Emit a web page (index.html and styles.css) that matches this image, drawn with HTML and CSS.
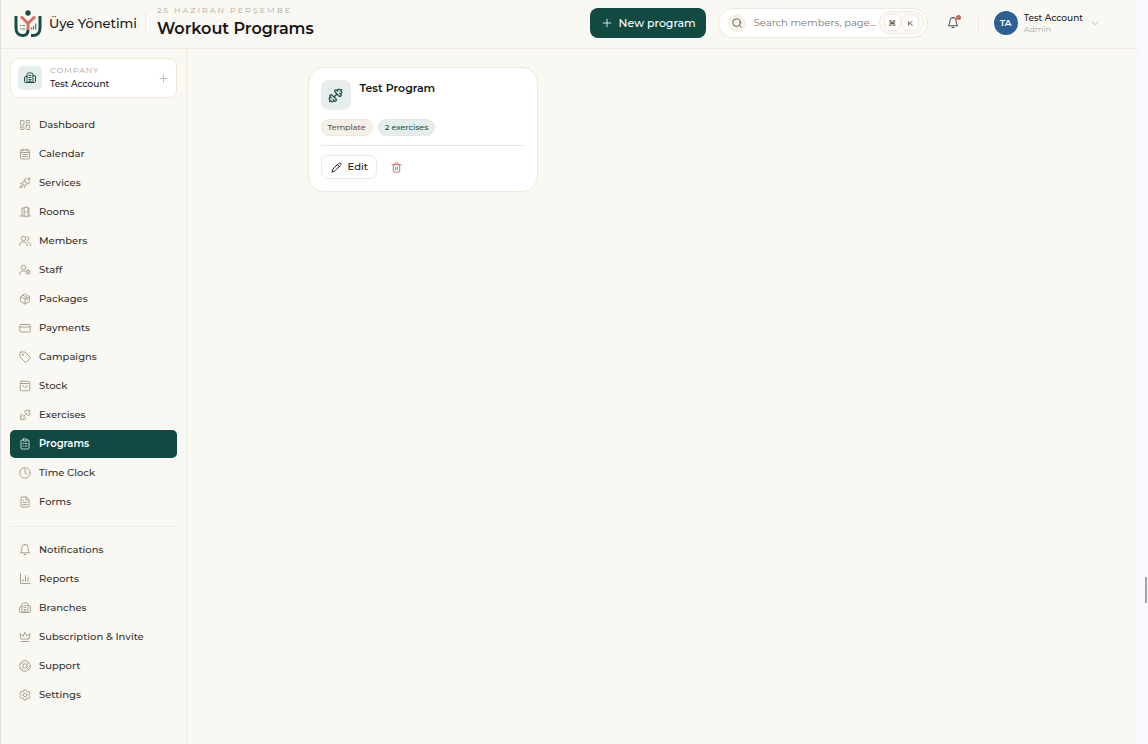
FILE: index.html
```html
<!DOCTYPE html>
<html lang="en">
<head>
<meta charset="utf-8">
<meta name="viewport" content="width=device-width, initial-scale=1">
<title>Workout Programs</title>
<link rel="stylesheet" href="styles.css">
</head>
<body>
<svg class="sprite" aria-hidden="true">
  <symbol id="dashboard" viewBox="0 0 24 24"><rect x="3" y="3" width="7" height="9" rx="1"/><rect x="14" y="3" width="7" height="5" rx="1"/><rect x="14" y="12" width="7" height="9" rx="1"/><rect x="3" y="16" width="7" height="5" rx="1"/></symbol>
  <symbol id="calendar" viewBox="0 0 24 24"><rect x="3" y="4" width="18" height="18" rx="2"/><path d="M8 2v4M16 2v4M3 9h18M7 13h10M7 17h10"/></symbol>
  <symbol id="services" viewBox="0 0 24 24"><path d="M11 5l2 6 6 2-6 2-2 6-2-6-6-2 6-2zM20 1v6M17 4h6M14 2v2M21 10v2M4 17v5M1.500 19.500h5"/></symbol>
  <symbol id="rooms" viewBox="0 0 24 24"><path d="M11 3l7-1v20l-7-2zM11 4H6v16M2 20h9M18 4h2v16h3M14 11v2"/></symbol>
  <symbol id="members" viewBox="0 0 24 24"><circle cx="9" cy="7" r="4.500"/><path d="M1 21c0-5 3-7 8-7s8 2 8 7M16 3a4 4 0 0 1 0 8M19 14c2 1 4 3 4 7"/></symbol>
  <symbol id="staff" viewBox="0 0 24 24"><circle cx="9" cy="7" r="4.500"/><path d="M1 21c0-5 3-7 8-7l3 .5"/><circle cx="18" cy="16" r="3"/><path d="M18 11v2M18 19v2M13.700 13.500l1.700 1M20.600 17.500l1.700 1M13.700 18.500l1.700-1M20.600 14.500l1.700-1"/></symbol>
  <symbol id="packages" viewBox="0 0 24 24"><path d="M12 2l8 4.500a2 2 0 0 1 1 2v7a2 2 0 0 1-1 2L12 22l-8-4.500a2 2 0 0 1-1-2v-7a2 2 0 0 1 1-2zM3.500 7.500L12 12l8.500-4.500M12 12v10M8 4.500l8.500 5v4"/></symbol>
  <symbol id="payments" viewBox="0 0 24 24"><rect x="1.500" y="5" width="21" height="15" rx="2"/><path d="M2 10h20"/></symbol>
  <symbol id="campaigns" viewBox="0 0 24 24"><path d="M3 2h9l10 10a2 2 0 0 1 0 3l-7 7a2 2 0 0 1-3 0L2 12V3a1 1 0 0 1 1-1z"/><circle cx="7.500" cy="7.500" r="1"/></symbol>
  <symbol id="stock" viewBox="0 0 24 24"><rect x="2.500" y="2.500" width="19" height="19" rx="2"/><path d="M3 7h18M8 11c0 5 8 5 8 0"/></symbol>
  <symbol id="dumbbell" viewBox="0 0 24 24"><path d="M14.400 14.400L9.600 9.600M18.657 21.485a2 2 0 1 1-2.829-2.828l-1.767 1.768a2 2 0 1 1-2.829-2.829l6.364-6.364a2 2 0 1 1 2.829 2.829l-1.768 1.767a2 2 0 1 1 2.828 2.829zM21.500 21.500l-1.400-1.400M3.900 3.900L2.500 2.500M6.404 12.768a2 2 0 1 1-2.829-2.829l1.768-1.767a2 2 0 1 1-2.828-2.829l2.828-2.828a2 2 0 1 1 2.829 2.828l1.767-1.768a2 2 0 1 1 2.829 2.829z" transform="matrix(-1 0 0 1 24 0)"/></symbol>
  <symbol id="programs" viewBox="0 0 24 24"><path d="M8 4H6a2 2 0 0 0-2 2v14a2 2 0 0 0 2 2h12a2 2 0 0 0 2-2V6a2 2 0 0 0-2-2h-2"/><rect x="8" y="2" width="8" height="4" rx="1"/><path d="M8 11h1M12 11h4M8 16h1M12 16h4"/></symbol>
  <symbol id="clock" viewBox="0 0 24 24"><circle cx="12" cy="12" r="10.500"/><path d="M12 5v7l4 3"/></symbol>
  <symbol id="forms" viewBox="0 0 24 24"><path d="M14 2H6a2 2 0 0 0-2 2v16a2 2 0 0 0 2 2h12a2 2 0 0 0 2-2V8zM14 2v6h6M8 9h2M8 13h8M8 17h8"/></symbol>
  <symbol id="bell" viewBox="0 0 24 24"><path d="M3 17c3-3 2-6 3-10a6 6 0 0 1 12 0c1 4 0 7 3 10zM10 21h4M12 1v1"/></symbol>
  <symbol id="reports" viewBox="0 0 24 24"><path d="M3 2v19h19M8 17v-4M13 17V5M18 17V9"/></symbol>
  <symbol id="building" viewBox="0 0 24 24"><path d="M6 21V5a3 3 0 0 1 3-3h6a3 3 0 0 1 3 3v16M6 9H4a3 3 0 0 0-3 3v7a2 2 0 0 0 2 2h18a2 2 0 0 0 2-2v-9a3 3 0 0 0-3-3h-2M10 7h4M10 11h4M10 15h4M10 21v-3h4v3"/></symbol>
  <symbol id="crown" viewBox="0 0 24 24"><path d="M12 3l4 7 6-5-2 11H4L2 5l6 5zM4 21h16"/></symbol>
  <symbol id="support" viewBox="0 0 24 24"><circle cx="12" cy="12" r="10.500"/><circle cx="12" cy="12" r="4.500"/><path d="M4.900 4.900L9 9M15 9l4.100-4.100M15 15l4.100 4.100M9 15l-4.100 4.100"/></symbol>
  <symbol id="settings" viewBox="0 0 24 24"><path d="M10 2h4l1 3 2 1 3-1 2 4-2 2v2l2 2-2 4-3-1-2 1-1 3h-4l-1-3-2-1-3 1-2-4 2-2v-2L2 9l2-4 3 1 2-1z"/><circle cx="12" cy="12" r="3.500"/></symbol>
  <symbol id="plus" viewBox="0 0 24 24"><path d="M12 3v18M3 12h18"/></symbol>
  <symbol id="search" viewBox="0 0 24 24"><circle cx="11" cy="11" r="9"/><path d="M22 22l-4-4"/></symbol>
  <symbol id="chevron" viewBox="0 0 24 24"><path d="M3 8l9 9 9-9"/></symbol>
  <symbol id="pencil" viewBox="0 0 24 24"><path d="M17 3a2.800 2.800 0 1 1 4 4L8 20l-6 2 2-6zM14 6l4 4"/></symbol>
  <symbol id="trash" viewBox="0 0 24 24"><path d="M2 6h20M19 6v14a2 2 0 0 1-2 2H7a2 2 0 0 1-2-2V6M8 6V4a2 2 0 0 1 2-2h4a2 2 0 0 1 2 2v2M10 11v6M14 11v6"/></symbol>
</svg>
<div class="app">
  <header class="topbar">
    <a class="brand" href="#">
      <svg class="logo" viewBox="0 0 30 30" aria-hidden="true">
        <path class="logo-frame" d="M3 8v12c0 5 3 7.500 7 7.500s5-2.500 5-6M27 8v12c0 5-3 7.500-7 7.500h-2"/>
        <path class="logo-arms" d="M8 8.500l7 7 7-7M15 15v7"/>
        <circle class="logo-dot" cx="15" cy="5" r="2.700"/>
        <path class="logo-detail" d="M7 17.500h1.500M9.500 17.500h2.500M7 21h1.500M9.500 21h2.500M18.500 21.500v-2M20.500 21.500v-3.500M22.700 21.500v-6"/>
      </svg>
      <span>Üye Yönetimi</span>
    </a>
    <div class="heading">
      <p class="date">25 HAZİRAN PERŞEMBE</p>
      <h1>Workout Programs</h1>
    </div>
    <button class="new-program" type="button"><svg class="icon"><use href="#plus"/></svg>New program</button>
    <div class="search">
      <label class="search-icon" for="q" aria-label="Search"><svg class="icon"><use href="#search"/></svg></label>
      <input id="q" type="text" placeholder="Search members, page...">
      <span class="keys"><kbd>⌘</kbd><kbd>K</kbd></span>
    </div>
    <button class="alerts" type="button" aria-label="Notifications"><svg class="icon"><use href="#bell"/></svg><span class="alert-dot"></span></button>
    <button class="account" type="button">
      <span class="avatar">TA</span>
      <span class="account-text"><span class="account-name">Test Account</span><span class="account-role">Admin</span></span>
      <svg class="icon chevron"><use href="#chevron"/></svg>
    </button>
  </header>
  <aside class="sidebar">
    <button class="company" type="button">
      <span class="company-icon"><svg class="icon"><use href="#building"/></svg></span>
      <span class="company-text"><span class="company-label">COMPANY</span><span class="company-name">Test Account</span></span>
      <svg class="icon company-plus"><use href="#plus"/></svg>
    </button>
    <nav>
      <ul class="nav">
        <li><a href="#"><svg class="icon"><use href="#dashboard"/></svg>Dashboard</a></li>
        <li><a href="#"><svg class="icon"><use href="#calendar"/></svg>Calendar</a></li>
        <li><a href="#"><svg class="icon"><use href="#services"/></svg>Services</a></li>
        <li><a href="#"><svg class="icon"><use href="#rooms"/></svg>Rooms</a></li>
        <li><a href="#"><svg class="icon"><use href="#members"/></svg>Members</a></li>
        <li><a href="#"><svg class="icon"><use href="#staff"/></svg>Staff</a></li>
        <li><a href="#"><svg class="icon"><use href="#packages"/></svg>Packages</a></li>
        <li><a href="#"><svg class="icon"><use href="#payments"/></svg>Payments</a></li>
        <li><a href="#"><svg class="icon"><use href="#campaigns"/></svg>Campaigns</a></li>
        <li><a href="#"><svg class="icon"><use href="#stock"/></svg>Stock</a></li>
        <li><a href="#"><svg class="icon"><use href="#dumbbell"/></svg>Exercises</a></li>
        <li><a class="current" href="#" aria-current="page"><svg class="icon"><use href="#programs"/></svg>Programs</a></li>
        <li><a href="#"><svg class="icon"><use href="#clock"/></svg>Time Clock</a></li>
        <li><a href="#"><svg class="icon"><use href="#forms"/></svg>Forms</a></li>
      </ul>
      <ul class="nav nav-secondary">
        <li><a href="#"><svg class="icon"><use href="#bell"/></svg>Notifications</a></li>
        <li><a href="#"><svg class="icon"><use href="#reports"/></svg>Reports</a></li>
        <li><a href="#"><svg class="icon"><use href="#building"/></svg>Branches</a></li>
        <li><a href="#"><svg class="icon"><use href="#crown"/></svg>Subscription &amp; Invite</a></li>
        <li><a href="#"><svg class="icon"><use href="#support"/></svg>Support</a></li>
        <li><a href="#"><svg class="icon"><use href="#settings"/></svg>Settings</a></li>
      </ul>
    </nav>
  </aside>
  <main class="content">
    <div class="cards">
      <article class="card">
        <div class="card-head">
          <span class="card-icon"><svg class="icon"><use href="#dumbbell"/></svg></span>
          <h2>Test Program</h2>
        </div>
        <div class="tags"><span class="tag">Template</span><span class="tag tag-green">2 exercises</span></div>
        <div class="card-actions">
          <button class="edit" type="button"><svg class="icon"><use href="#pencil"/></svg>Edit</button>
          <button class="delete" type="button" aria-label="Delete"><svg class="icon"><use href="#trash"/></svg></button>
        </div>
      </article>
    </div>
  </main>
</div>
<div class="scroll-thumb"></div>
</body>
</html>
```
FILE: styles.css
```css
* { box-sizing: border-box; margin: 0; padding: 0; }
body {
  min-height: 100vh;
  padding-right: 10px;
  background: #f8f9fe;
  color: #171717;
  font: 500 11px/14px Montserrat, Inter, "Open Sans", sans-serif;
}
button, input, kbd { font: inherit; color: inherit; }
button { border: 0; background: none; text-align: left; cursor: pointer; }
a { color: inherit; text-decoration: none; }
ul { list-style: none; }
.sprite { position: absolute; width: 0; height: 0; }
.icon {
  flex: none;
  width: 12px;
  height: 12px;
  fill: none;
  stroke: currentColor;
  stroke-width: 2;
  stroke-linecap: round;
  stroke-linejoin: round;
}
.app {
  display: grid;
  grid-template-columns: 186px 1fr;
  grid-template-rows: 49px 1fr;
  min-height: 100vh;
  border-left: 1px solid #dfe1e5;
  background: #faf8f3;
}

/* Top bar */
.topbar {
  grid-column: 1 / -1;
  display: flex;
  align-items: center;
  padding: 0 39px 3px 12px;
  border-bottom: 1px solid #efe8dc;
}
.brand {
  display: flex;
  align-items: center;
  gap: 6px;
  padding-right: 8px;
  font-size: 13px;
  line-height: 22px;
  white-space: nowrap;
}
.logo { width: 30px; height: 30px; fill: none; }
.logo-frame { stroke: #174e47; stroke-width: 3; }
.logo-arms { stroke: #df6d5d; stroke-width: 3; }
.logo-dot { fill: #174e47; }
.logo-detail { stroke: #4b7771; stroke-width: 1.2; }
.heading {
  flex: 1;
  padding-left: 12px;
  background: linear-gradient(#eee9df, #eee9df) left center / 1px 21px no-repeat;
  white-space: nowrap;
}
.date { color: #b0aa9d; font-size: 8px; line-height: 10px; letter-spacing: 2px; font-weight: 400; }
h1 { margin-top: 2px; font-size: 16px; line-height: 24px; font-weight: 600; }
.new-program {
  display: flex;
  align-items: center;
  gap: 7px;
  height: 30px;
  margin-right: 12px;
  padding: 0 10px 0 12px;
  border-radius: 8px;
  background: #104a43;
  color: #fff;
  white-space: nowrap;
}
.new-program .icon, .search .icon { width: 10px; height: 10px; }
.search {
  display: flex;
  align-items: center;
  width: 210px;
  height: 30px;
  padding: 0 3px 0 9px;
  border: 1px solid #eee8dd;
  border-radius: 15px;
  background: #fff;
}
.search-icon {
  display: grid;
  place-items: center;
  width: 18px;
  height: 18px;
  margin-right: 8px;
  border-radius: 9px;
  background: #f5f0e8;
  color: #444;
}
.search input { flex: 1; min-width: 0; border: 0; outline: 0; background: none; font-size: 10px; font-weight: 400; }
.search input::placeholder { color: #77736c; }
.keys {
  display: flex;
  gap: 1px;
  padding: 2px 4px;
  border: 1px solid #eee8dd;
  border-radius: 11px;
  background: #fcfaf6;
}
kbd {
  display: grid;
  place-items: center;
  width: 17px;
  height: 17px;
  border: 1px solid #eee8dd;
  border-radius: 6px;
  background: #fff;
  color: #5b5750;
  font-size: 8px;
}
.alerts { position: relative; display: grid; place-items: center; width: 24px; height: 24px; margin-left: 13px; color: #444; }
.alert-dot { position: absolute; top: 4px; right: 4px; width: 5px; height: 5px; border-radius: 50%; background: #cb6654; }
.account {
  display: flex;
  align-items: center;
  gap: 6px;
  margin-left: 13px;
  padding-left: 16px;
  background: linear-gradient(#eee9df, #eee9df) left center / 1px 18px no-repeat;
}
.avatar {
  display: grid;
  place-items: center;
  width: 24px;
  height: 24px;
  border-radius: 50%;
  background: #2c6094;
  color: #fff;
  font-size: 9px;
  font-weight: 600;
}
.account-text, .company-text { display: grid; white-space: nowrap; }
.account-name { font-size: 9px; line-height: 12px; }
.account-role { color: #aaa499; font-size: 8px; line-height: 10px; font-weight: 400; }
.chevron { width: 8px; height: 8px; margin-left: 2px; color: #aaa499; }

/* Sidebar */
.sidebar { padding: 9px 9px 24px; border-right: 1px solid #eeebe3; }
.company {
  display: flex;
  align-items: center;
  gap: 8px;
  width: 100%;
  height: 40px;
  margin-bottom: 13px;
  padding: 0 8px 0 7px;
  border: 1px solid #eee8dd;
  border-radius: 8px;
  background: #fff;
}
.company-icon {
  display: grid;
  place-items: center;
  width: 24px;
  height: 24px;
  border-radius: 5px;
  background: #e5eeec;
  color: #174e47;
}
.company-text { flex: 1; row-gap: 1px; padding-bottom: 2px; }
.company-label { color: #aaa499; font-size: 8px; line-height: 12px; letter-spacing: 1px; font-weight: 400; }
.company-name { font-size: 9px; line-height: 14px; }
.company-plus { width: 9px; height: 9px; color: #aaa499; }
.nav { display: grid; gap: 1px; }
.nav a {
  display: flex;
  align-items: center;
  gap: 8px;
  height: 28px;
  padding: 0 9px;
  border-radius: 5px;
  color: #37332f;
  font-size: 10px;
  white-space: nowrap;
}
.nav .icon { color: #aaa290; }
.nav a.current { background: #104a43; color: #fff; font-weight: 600; }
.nav .current .icon { color: #c7d5d1; }
.nav-secondary { margin-top: 10px; padding-top: 9px; border-top: 1px solid #eeebe3; }

/* Program cards */
.content { padding: 18px 24px; }
.cards {
  display: grid;
  grid-template-columns: repeat(3, 1fr);
  gap: 9px;
  max-width: 710px;
  margin: 0 auto;
}
.card {
  padding: 12px;
  border: 1px solid #eee8dd;
  border-radius: 16px;
  background: #fff;
}
.card-head { display: flex; gap: 9px; }
.card-icon {
  display: grid;
  place-items: center;
  width: 30px;
  height: 30px;
  border-radius: 8px;
  background: #e5eeec;
  color: #174e47;
}
.card-icon .icon { width: 15px; height: 15px; }
h2 { font-size: 11px; line-height: 16px; font-weight: 600; }
.tags { display: flex; gap: 5px; margin-top: 9px; }
.tag {
  padding: 0 6px;
  border: 1px solid #eee5db;
  border-radius: 9px;
  background: #f6f0e9;
  color: #5b514a;
  font-size: 8px;
  line-height: 15px;
}
.tag-green { border-color: #e2e8e1; background: #e5eeec; color: #174e47; }
.card-actions {
  display: flex;
  align-items: center;
  gap: 8px;
  margin-top: 9px;
  padding-top: 9px;
  border-top: 1px solid #eee8dd;
}
.edit {
  display: flex;
  align-items: center;
  gap: 6px;
  height: 24px;
  padding: 0 8px 0 9px;
  border: 1px solid #eee8dd;
  border-radius: 7px;
  font-size: 10px;
}
.edit .icon { width: 11px; height: 11px; }
.delete { display: grid; place-items: center; width: 24px; height: 24px; color: #bd6868; }
.delete .icon { width: 11px; height: 11px; }

.scroll-thumb { position: fixed; right: 1px; bottom: 141px; width: 2px; height: 26px; background: #a3a3a3; }
```
